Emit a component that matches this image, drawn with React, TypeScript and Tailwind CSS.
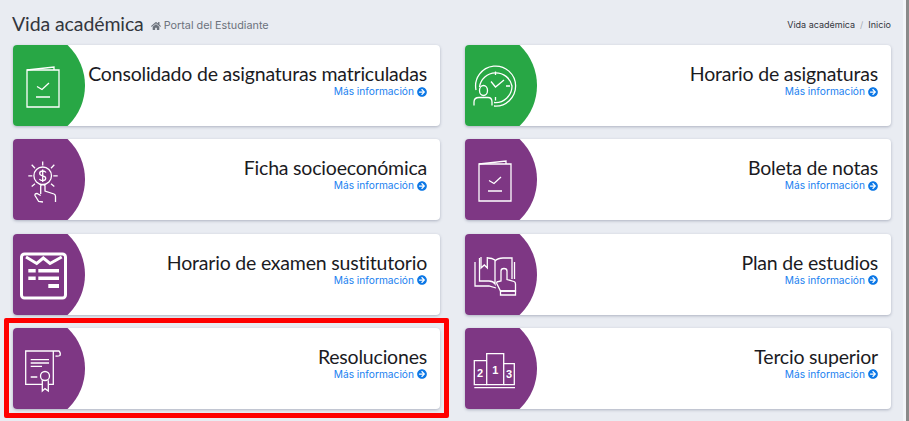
import { FaArrowCircleRight, FaHome } from 'react-icons/fa';
import type { ReactNode } from 'react';

function DocIcon() {
  return (
    <>
      <path d="M14 25H46V62H14Z" />
      <path d="M14 25L41 22V25" />
      <path d="M24 41.5L29 44.5L36 38" />
      <path d="M23 52H37" />
    </>
  );
}

function ClockIcon() {
  return (
    <>
      <path d="M11 45A20 20 0 1 1 29 61" />
      <path d="M14.5 42A16.5 16.5 0 0 1 47 41A16.5 16.5 0 0 1 29 57.5" />
      <path d="M30.5 26.5V30M30.5 52V55.5M41 41H45" />
      <path d="M26 36.5L30.5 42L39 35" />
      <ellipse cx="18.5" cy="45.5" rx="4" ry="5" />
      <path d="M9 60.5V57Q9 52.5 14 52.5H23Q27 52.5 27 57V60.5" />
    </>
  );
}

function SocioIcon() {
  return (
    <>
      <circle cx="29.7" cy="36.8" r="8.8" />
      <path d="M29.7 22.5V26.5M15.3 36.8H19.3M40.3 36.8H44.7M18.7 25.8L22 29.2M41.3 25.8L38 29.2M18.7 47.5L22 44.8M41.3 47.5L38 44.8" />
      <path d="M33 33.5Q32 32 29.7 32Q26.7 32 26.7 34.3Q26.7 36.4 29.7 36.8Q32.7 37.2 32.7 39.3Q32.7 41.6 29.7 41.6Q27.4 41.6 26.4 40M29.7 30.5V43" />
      <path d="M27.7 55V47Q27.7 45.5 29.8 45.5Q32 45.5 32 47V52L41 55Q42.5 55.5 42.5 57.5V63M30 63L25.7 62.5L22 56.5Q21.5 54.5 24 54.5L27.7 56.5" />
    </>
  );
}

function ExamIcon() {
  return (
    <>
      <rect x="8.5" y="20" width="44" height="44" rx="3" strokeWidth="3" />
      <path d="M13 23L23.7 29.5L30.3 24L37 29.5L48.7 23" strokeWidth="3" />
      <path
        d="M15.3 35H22.7V38.5H15.3ZM25.3 35H46V38.5H25.3ZM15.3 42.5H22.7V46H15.3ZM25.3 42.5H46V46H25.3ZM35.3 50H46V54H35.3Z"
        fill="white"
        stroke="none"
      />
    </>
  );
}

function BookIcon() {
  return (
    <>
      <path d="M14.5 24V47H24Q28 47 30 50V26Q27 24 23 24" />
      <path d="M10 28V52H24L31 54" />
      <path d="M30 27Q33 24 38 24H47V45" />
      <path d="M49.5 28V45" />
      <path d="M16 23V34L19.3 31L22.3 34V23" />
      <path d="M36 47V37Q36 34.5 39 34.5Q42 34.5 42 37V45.5L49 47.5Q50.5 48 50.5 50V57H35.5L32 50Q31 47.5 33.5 47.5Z" />
      <path d="M35.5 57H50.5V61H35.5Z" />
    </>
  );
}

function ScrollIcon() {
  return (
    <>
      <path d="M29 56.3H12.7V23H46Q48 25 47 27.5Q45 28.5 42.5 28" />
      <path d="M40.3 23V56.3H36" />
      <path d="M17.7 31.6H36M17.7 35H36M17.7 38.3H29M17.7 49H24.3" />
      <circle cx="32" cy="48" r="4.5" />
      <path d="M29.3 52.3V63L32 60.6L35.3 63V52.3" />
    </>
  );
}

function PodiumIcon() {
  return (
    <>
      <path d="M21.7 56.6H9.3V32.6H21.7M38.7 35.6H49.3V56.6H38.7" />
      <path d="M21.7 25.6H38.7V56.6H21.7Z" />
      <path d="M9.3 59.6H50" />
      <g fill="white" stroke="none" fontSize="11" fontWeight="700" textAnchor="middle" className="font-['Liberation_Sans',sans-serif]">
        <text x="15" y="48.5">2</text>
        <text x="30.3" y="45.5">1</text>
        <text x="44" y="50">3</text>
      </g>
    </>
  );
}

type Item = { title: string; purple: boolean; icon: ReactNode };

const items: Item[] = [
  { title: 'Consolidado de asignaturas matriculadas', purple: false, icon: <DocIcon /> },
  { title: 'Horario de asignaturas', purple: false, icon: <ClockIcon /> },
  { title: 'Ficha socioeconómica', purple: true, icon: <SocioIcon /> },
  { title: 'Boleta de notas', purple: true, icon: <DocIcon /> },
  { title: 'Horario de examen sustitutorio', purple: true, icon: <ExamIcon /> },
  { title: 'Plan de estudios', purple: true, icon: <BookIcon /> },
  { title: 'Resoluciones', purple: true, icon: <ScrollIcon /> },
  { title: 'Tercio superior', purple: true, icon: <PodiumIcon /> },
];

function Card({ item, marked }: { item: Item; marked: boolean }) {
  return (
    <div className="relative">
      <div className="relative flex h-[81px] items-center overflow-hidden rounded-[4px] bg-white shadow-[0_1px_3px_rgba(60,70,100,0.35)]">
        <div className={`-ml-[39px] h-[111px] w-[111px] flex-none rounded-full ${item.purple ? 'bg-[#7e3784]' : 'bg-[#28a745]'}`} />
        <svg className="absolute left-0 top-0" width="72" height="81" viewBox="0 0 72 81" fill="none" stroke="white" strokeWidth="1.3">
          {item.icon}
        </svg>
        <div className="flex min-w-0 flex-1 flex-col items-end self-start pr-[13px] pt-[17px]">
          <div className="whitespace-nowrap font-['Lato',sans-serif] text-[19.5px] leading-[23px] tracking-[-0.2px] text-[#1b1b1f]">{item.title}</div>
          <a className="flex items-center gap-[3px] whitespace-nowrap text-[10.2px] leading-[13px] text-[#1a7ff0]">
            Más información <FaArrowCircleRight className="text-[10px] text-[#0d78e6]" />
          </a>
        </div>
      </div>
      {marked && <div className="absolute -bottom-[9px] -left-[9px] -right-[9px] -top-[10px] rounded-[2px] border-[5px] border-[#ff0000]" />}
    </div>
  );
}

export default function App() {
  return (
    <div className="flex h-[421px] w-[909px] overflow-hidden font-['Inter',sans-serif]">
      <div className="w-[903px] flex-none bg-[#e9ecf2]">
        <div className="flex h-[45px] items-start justify-between pl-[12px] pr-[12px]">
          <div className="flex items-baseline gap-[7px] pt-[11px]">
            <h1 className="font-['Lato',sans-serif] text-[19.5px] leading-[26px] tracking-[-0.1px] text-[#33363d]">Vida académica</h1>
            <span className="flex items-center gap-[3px] text-[10.8px] text-[#6c727c]">
              <FaHome className="text-[10px]" /> Portal del Estudiante
            </span>
          </div>
          <div className="flex gap-[5px] pt-[18px] text-[9px] leading-[13px] text-[#33363d]">
            <span>Vida académica</span>
            <span className="text-[#a8adb5]">/</span>
            <span>Inicio</span>
          </div>
        </div>
        <div className="grid grid-cols-[427px_426px] gap-x-[25px] gap-y-[13.3px] pl-[13px]">
          {items.map(item => (
            <Card key={item.title} item={item} marked={item.title === 'Resoluciones'} />
          ))}
        </div>
      </div>
      <div className="w-[3px] flex-none bg-[#f3f5f8]" />
      <div className="flex-1 bg-[#8a8a8a]" />
    </div>
  );
}
